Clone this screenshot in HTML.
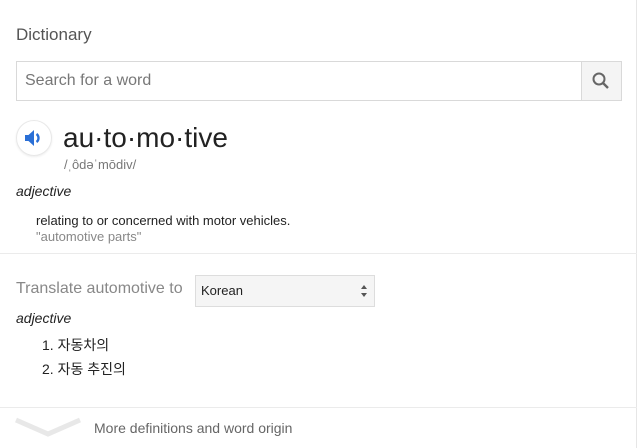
<!DOCTYPE html>
<html><head><meta charset="utf-8"><style>
*{margin:0;padding:0;box-sizing:border-box}
body{width:638px;height:448px;background:#fff;font-family:"Liberation Sans","Noto Sans CJK KR",sans-serif;position:relative;overflow:hidden}
.a{position:absolute;white-space:nowrap}
</style></head><body>
<div class="a" style="left:0;top:0;width:637px;height:448px;border-right:1px solid #e6e6e6"></div>
<div class="a" style="left:16px;top:25px;font-size:17px;color:#555">Dictionary</div>
<div class="a" style="left:16px;top:61px;width:606px;height:40px;border:1px solid #d9d9d9"></div>
<div class="a" style="left:25px;top:72px;font-size:16px;color:#777">Search for a word</div>
<div class="a" style="left:581px;top:61px;width:41px;height:40px;background:#f4f4f4;border:1px solid #d9d9d9"></div>
<svg class="a" style="left:591px;top:71px" width="20" height="20" viewBox="0 0 20 20"><circle cx="8" cy="8" r="5.5" fill="none" stroke="#666" stroke-width="2"/><path d="M12 12l5 5" stroke="#666" stroke-width="2.4"/></svg>
<div class="a" style="left:16px;top:120px;width:36px;height:36px;border-radius:50%;border:1px solid #e8e8e8;box-shadow:0 1px 2px rgba(0,0,0,.08)"></div>
<svg class="a" style="left:23px;top:128px" width="22" height="20" viewBox="0 0 22 20"><path d="M2 7h3.5l5.5-5v16l-5.5-5H2z" fill="#2a6fd6"/><path d="M13.5 6a5 5 0 010 8" fill="none" stroke="#2a6fd6" stroke-width="2.4"/></svg>
<div class="a" style="left:63px;top:122px;font-size:28px;color:#222">au·to·mo·tive</div>
<div class="a" style="left:64px;top:157px;font-size:13px;color:#777">/ˌôdəˈmōdiv/</div>
<div class="a" style="left:16px;top:183px;font-size:14px;font-style:italic;color:#222">adjective</div>
<div class="a" style="left:36px;top:213px;font-size:13px;color:#222">relating to or concerned with motor vehicles.</div>
<div class="a" style="left:36px;top:229px;font-size:13px;color:#888">"automotive parts"</div>
<div class="a" style="left:0;top:253px;width:637px;height:1px;background:#ebebeb"></div>
<div class="a" style="left:16px;top:280px;font-size:16px;color:#888">Translate automotive to</div>
<div class="a" style="left:195px;top:275px;width:180px;height:32px;background:#f5f5f5;border:1px solid #ddd"></div>
<div class="a" style="left:201px;top:283px;font-size:13px;color:#222">Korean</div>
<svg class="a" style="left:360px;top:284px" width="8" height="14" viewBox="0 0 8 14"><path d="M4 1l3 4H1zM4 13l3-4H1z" fill="#555"/></svg>
<div class="a" style="left:16px;top:310px;font-size:14px;font-style:italic;color:#222">adjective</div>
<div class="a" style="left:42px;top:335px;font-size:14px;color:#222">1. 자동차의</div>
<div class="a" style="left:42px;top:359px;font-size:14px;color:#222">2. 자동 추진의</div>
<div class="a" style="left:0;top:407px;width:637px;height:1px;background:#ebebeb"></div>
<svg class="a" style="left:14px;top:414px" width="68" height="26" viewBox="0 0 68 26"><path d="M2 6l32 14 32-14" fill="none" stroke="#e8e8e8" stroke-width="5"/></svg>
<div class="a" style="left:94px;top:420px;font-size:14px;color:#666">More definitions and word origin</div>
</body></html>
